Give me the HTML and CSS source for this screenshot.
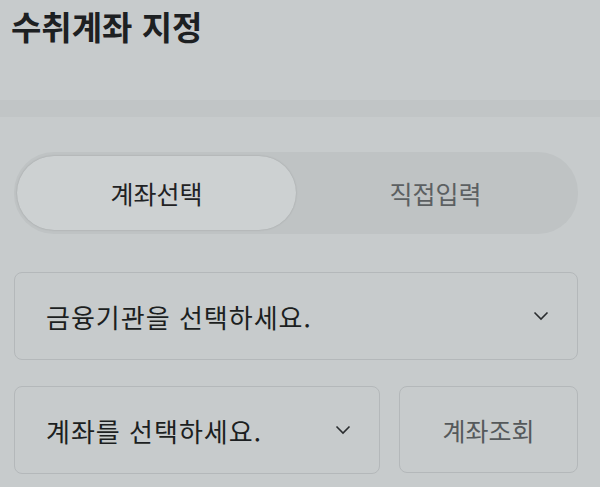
FILE: index.html
```html
<!DOCTYPE html>
<html lang="ko">
<head>
    <meta charset="UTF-8">
    <meta name="viewport" content="width=device-width, initial-scale=1.0">
    <title>수취계좌 지정</title>
    <link rel="stylesheet" href="styles.css">
</head>
<body>
    <header class="top">
        <h1 class="title">수취계좌 지정</h1>
    </header>
    <div class="band"></div>

    <main class="form">
        <div class="tabs">
            <button class="tab active">계좌선택</button>
            <button class="tab">직접입력</button>
        </div>

        <div class="select">
            <span>금융기관을 선택하세요.</span>
            <svg class="chevron" width="16" height="10" viewBox="0 0 16 10"><path d="M1.5 1.5 L8 8 L14.5 1.5" fill="none" stroke="#2a2d2f" stroke-width="1.6"/></svg>
        </div>

        <div class="row">
            <div class="select">
                <span>계좌를 선택하세요.</span>
                <svg class="chevron" width="16" height="10" viewBox="0 0 16 10"><path d="M1.5 1.5 L8 8 L14.5 1.5" fill="none" stroke="#2a2d2f" stroke-width="1.6"/></svg>
            </div>
            <button class="lookup">계좌조회</button>
        </div>
    </main>
</body>
</html>
```

FILE: styles.css
```css
body {
    margin: 0;
    background-color: #c7cbcc;
    font-family: "Noto Sans CJK KR", "Noto Sans", sans-serif;
    color: #1f2224;
}
.top {
    height: 100px;
    padding: 0 11px;
}
.title {
    margin: 0;
    padding-top: 2px;
    font-size: 33px;
    font-weight: 700;
    line-height: 48px;
    color: #1d2022;
}
.band {
    height: 17px;
    background: #c1c5c6;
}
.form {
    padding: 35px 22px 0 14px;
}
.tabs {
    display: flex;
    padding: 4px 3px;
    background: #bfc3c4;
    border-radius: 40px;
}
.tab {
    flex: 1;
    height: 74px;
    border: 0;
    border-radius: 37px;
    background: transparent;
    font-family: inherit;
    font-size: 25px;
    color: #5c6062;
}
.tab.active {
    background: #cdd1d2;
    color: #1f2224;
    box-shadow: 0 0 2px rgba(0, 0, 0, 0.18);
}
.select {
    display: flex;
    align-items: center;
    justify-content: space-between;
    height: 86px;
    margin-top: 38px;
    padding: 0 28px 0 31px;
    border: 1px solid #b4b8ba;
    border-radius: 8px;
    font-size: 26px;
    letter-spacing: 1px;
    color: #1c1f21;
}
.row {
    display: flex;
    gap: 19px;
    margin-top: 26px;
}
.row .select {
    flex: 1;
    margin-top: 0;
}
.lookup {
    width: 179px;
    height: 87px;
    border: 1px solid #b4b8ba;
    border-radius: 8px;
    background: transparent;
    font-family: inherit;
    font-size: 25px;
    color: #55595b;
}
```
